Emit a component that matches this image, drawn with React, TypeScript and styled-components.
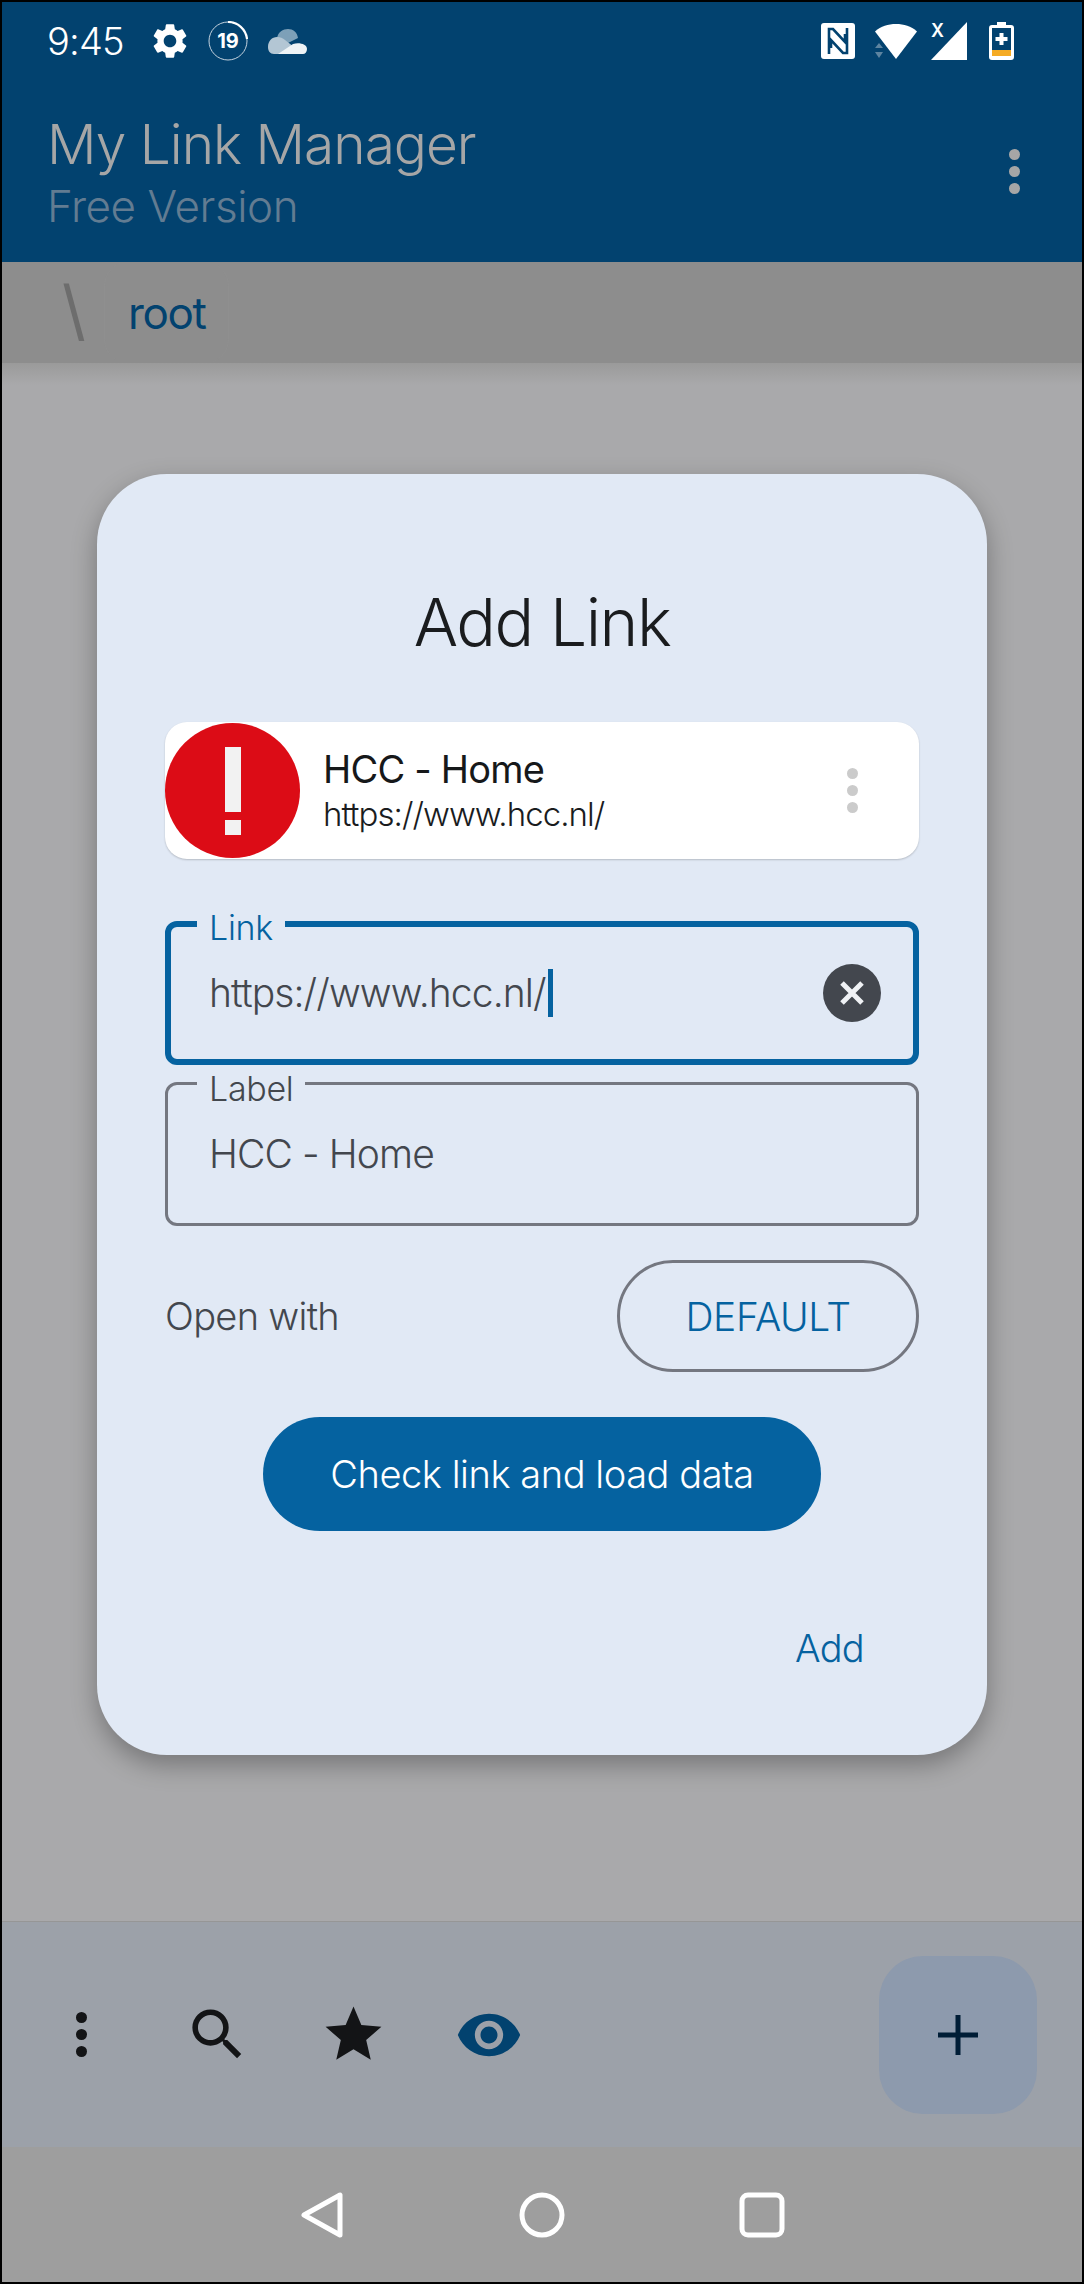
import styled, { createGlobalStyle } from 'styled-components'
import { MdSearch, MdSettings, MdStar, MdVisibility } from 'react-icons/md'

const BLUE = '#0562a0'
const DIALOG = '#e1e9f5'

const GlobalStyle = createGlobalStyle`
  * { box-sizing: border-box; }
  html, body { margin: 0; padding: 0; background: #000; }
  body { font-family: Inter, "Liberation Sans", sans-serif; font-weight: 300; }
`

const Screen = styled.div`
  width: 1084px;
  height: 2284px;
  border: 2px solid #000;
  display: flex;
  flex-direction: column;
  overflow: hidden;
  background: #a9a9ab;
`
const StatusBar = styled.div`
  height: 78px;
  flex: none;
  background: #02426f;
  padding: 0 68px 0 45px;
  display: flex;
  align-items: center;
  justify-content: space-between;
  color: #fff;
`
const StatusGroup = styled.div`
  display: flex;
  align-items: center;
`
const Time = styled.span`
  font-size: 38px;
  width: 78px;
  letter-spacing: -0.8px;
  margin-right: 24px;
`
const AppBar = styled.header`
  height: 182px;
  flex: none;
  background: #02426f;
  padding: 0 62px 0 45px;
  display: flex;
  align-items: center;
  justify-content: space-between;
`
const TitleBlock = styled.div`
  display: flex;
  flex-direction: column;
  margin-top: 2px;
`
const AppTitle = styled.div`
  font-size: 55px;
  line-height: 62px;
  color: #a6a6a6;
  letter-spacing: -1px;
`
const AppSubtitle = styled.div`
  font-size: 44px;
  line-height: 50px;
  margin-top: 6px;
  color: #627c92;
  letter-spacing: -0.45px;
`
const DotsColumn = styled.div<{ $size: number; $gap: number; $color: string }>`
  display: flex;
  flex-direction: column;
  gap: ${p => p.$gap}px;
  span {
    display: block;
    width: ${p => p.$size}px;
    height: ${p => p.$size}px;
    border-radius: 50%;
    background: ${p => p.$color};
  }
`
const Breadcrumb = styled.nav`
  height: 101px;
  flex: none;
  background: #8d8d8d;
  padding-left: 60px;
  display: flex;
  align-items: center;
`
const Separator = styled.span`
  font-size: 66px;
  font-weight: 400;
  color: #6d6d6d;
  width: 42px;
  margin-top: -6px;
`
const Crumb = styled.span`
  height: 101px;
  display: flex;
  align-items: center;
  padding: 0 23px;
  border: 1px solid #8f8f8f;
  border-top: 0;
  border-bottom: 0;
  border-radius: 24px;
  font-size: 44px;
  font-weight: 400;
  letter-spacing: -1.4px;
  color: #02426f;
`
const Main = styled.main`
  flex: 1;
  padding-top: 111px;
  display: flex;
  justify-content: center;
  align-items: flex-start;
  background: linear-gradient(#9a9a9a 0, #a9a9ab 22px);
`
const Dialog = styled.section`
  width: 890px;
  height: 1281px;
  background: ${DIALOG};
  border-radius: 70px;
  box-shadow: 0 10px 26px rgba(0, 0, 0, 0.3);
  padding: 129px 68px 0;
  display: flex;
  flex-direction: column;
`
const DialogTitle = styled.h2`
  margin: 0 0 80px;
  height: 39px;
  line-height: 39px;
  font-size: 66px;
  font-weight: 300;
  letter-spacing: -1.5px;
  text-align: center;
  color: #1a1c1e;
`
const Card = styled.div`
  height: 137px;
  flex: none;
  background: #fff;
  border-radius: 22px;
  box-shadow: 0 1px 2px rgba(0, 0, 0, 0.2);
  display: flex;
  align-items: center;
  padding-right: 61px;
  margin-bottom: 62px;
`
const ErrorBadge = styled.div`
  width: 135px;
  height: 135px;
  flex: none;
  border-radius: 50%;
  background: #dc0c16;
  display: flex;
  flex-direction: column;
  align-items: center;
  padding-top: 24px;
  gap: 8px;
  margin-right: 23px;
  i { display: block; width: 16px; background: #f2f2f2; }
  i:first-child { height: 65px; }
  i:last-child { height: 15px; }
`
const CardText = styled.div`
  flex: 1;
  display: flex;
  flex-direction: column;
`
const CardTitle = styled.div`
  font-size: 38px;
  line-height: 46px;
  font-weight: 400;
  letter-spacing: -0.8px;
  color: #16181a;
`
const CardUrl = styled.div`
  font-size: 33px;
  line-height: 42px;
  margin-top: 1px;
  letter-spacing: -0.95px;
  color: #1a1c1e;
`
const Field = styled.div<{ $focused?: boolean }>`
  position: relative;
  height: 144px;
  flex: none;
  border: ${p => (p.$focused ? `6px solid ${BLUE}` : '3px solid #747780')};
  border-radius: 12px;
  display: flex;
  align-items: center;
  justify-content: space-between;
  padding: 0 ${p => (p.$focused ? 32 : 30)}px 0 ${p => (p.$focused ? 38 : 41)}px;
  margin-bottom: 17px;
`
const FieldLabel = styled.label<{ $focused?: boolean }>`
  position: absolute;
  left: ${p => (p.$focused ? 26 : 29)}px;
  top: ${p => (p.$focused ? -17 : -14)}px;
  padding: 0 12px;
  background: ${DIALOG};
  font-size: 34px;
  line-height: 36px;
  letter-spacing: -0.3px;
  color: ${p => (p.$focused ? BLUE : '#43474e')};
`
const FieldValue = styled.div`
  font-size: 39px;
  line-height: 48px;
  letter-spacing: -0.9px;
  color: #43474e;
  display: flex;
  align-items: center;
`
const Caret = styled.span`
  display: block;
  width: 5px;
  height: 48px;
  margin-left: 2px;
  background: ${BLUE};
`
const ClearButton = styled.div`
  width: 58px;
  height: 58px;
  border-radius: 50%;
  background: #43474e;
  display: flex;
  align-items: center;
  justify-content: center;
`
const OpenRow = styled.div`
  display: flex;
  align-items: center;
  justify-content: space-between;
  margin: 17px 0 45px;
`
const OpenLabel = styled.span`
  font-size: 38px;
  letter-spacing: -0.7px;
  color: #43474e;
`
const OutlineButton = styled.div`
  width: 302px;
  height: 112px;
  border: 3px solid #747780;
  border-radius: 56px;
  display: flex;
  align-items: center;
  justify-content: center;
  font-size: 39px;
  letter-spacing: -0.4px;
  color: ${BLUE};
`
const PrimaryButton = styled.div`
  width: 558px;
  height: 114px;
  align-self: center;
  border-radius: 57px;
  background: ${BLUE};
  color: #fff;
  display: flex;
  align-items: center;
  justify-content: center;
  font-size: 38px;
  letter-spacing: -0.45px;
`
const AddAction = styled.div`
  align-self: flex-end;
  margin: 92px 55px 0 0;
  font-size: 38px;
  line-height: 50px;
  letter-spacing: -0.7px;
  color: ${BLUE};
`
const BottomBar = styled.div`
  height: 226px;
  flex: none;
  background: #9ca1a9;
  border-top: 1px solid #969696;
  padding: 0 45px 0 11px;
  display: flex;
  align-items: center;
  justify-content: space-between;
`
const BottomIcons = styled.div`
  display: flex;
`
const IconSlot = styled.div<{ $color?: string }>`
  width: 136px;
  display: flex;
  justify-content: center;
  align-items: center;
  color: ${p => p.$color ?? '#131416'};
`
const Fab = styled.div`
  width: 158px;
  height: 158px;
  border-radius: 44px;
  background: #8d9aad;
  display: flex;
  align-items: center;
  justify-content: center;
`
const NavBar = styled.div`
  height: 135px;
  flex: none;
  background: #9e9e9e;
  display: flex;
  align-items: center;
  justify-content: center;
`
const NavSlot = styled.div`
  width: 220px;
  display: flex;
  justify-content: center;
`

function Dots ({ size, gap, color }: Readonly<{ size: number, gap: number, color: string }>) {
  return (
    <DotsColumn $size={size} $gap={gap} $color={color}>
      <span /><span /><span />
    </DotsColumn>
  )
}

function NfcIcon () {
  return (
    <svg width="34" height="36" viewBox="0 0 34 36" style={{ marginRight: 20 }}>
      <rect width="34" height="36" rx="3" fill="#fff" />
      <path d="M8 31V6h4l12 13v-8M26 5v25h-4L10 17v8" fill="none" stroke="#02426f" strokeWidth="2.6" />
    </svg>
  )
}

function WifiIcon () {
  return (
    <svg width="42" height="37" viewBox="0 0 42 37" style={{ marginRight: 13 }}>
      <path d="M0 8.500C6 3 13 1 21 1s15 2 21 7.500L21 36Z" fill="#fff" />
      <path d="M0 25l4-5 4 5ZM0 29l4 6 4-6Z" fill="#5d84a0" />
    </svg>
  )
}

function CellIcon () {
  return (
    <svg width="38" height="44" viewBox="0 -6 38 44" style={{ marginRight: 21, marginTop: -6 }}>
      <path d="M37 0v38H1Z" fill="#fff" />
      <text x="1" y="15" fontFamily="Inter, sans-serif" fontSize="18" fontWeight="600" fill="#fff">X</text>
    </svg>
  )
}

function BatteryIcon () {
  return (
    <svg width="25" height="38" viewBox="0 0 25 38">
      <path d="M8 0h9v3h5a3 3 0 0 1 3 3v29a3 3 0 0 1-3 3H3a3 3 0 0 1-3-3V6a3 3 0 0 1 3-3h5Z" fill="#fff" />
      <rect x="3" y="6" width="19" height="22" fill="#02426f" />
      <rect x="3" y="28" width="19" height="6" fill="#f5ab24" />
      <path d="M10.500 11h4v4h4v4h-4v4h-4v-4h-4v-4h4Z" fill="#fff" />
    </svg>
  )
}

function TimerBadge () {
  return (
    <svg width="40" height="40" viewBox="0 0 40 40" style={{ marginRight: 20 }}>
      <circle cx="20" cy="20" r="19" fill="none" stroke="#c4d2de" strokeWidth="1" />
      <path d="M20 1a19 19 0 0 1 19 17" fill="none" stroke="#fff" strokeWidth="2.200" />
      <text x="20" y="27" textAnchor="middle" fontFamily="Inter, sans-serif" fontSize="20" fontWeight="700" fill="#fff">19</text>
    </svg>
  )
}

function CloudIcon () {
  return (
    <svg width="39" height="25" viewBox="0 0 39 25">
      <path d="M9 9C10 3 15 0 20 0s9 3 10 9l-12 6Z" fill="#7da0b8" />
      <path d="M0 18c0-6 4-10 9-10 3 0 6 1 8 3l9 7-10 7H6c-4 0-6-3-6-7Z" fill="#b3c6d4" />
      <path d="M10 25l15-10c6-2 14 0 14 5 0 3-2 5-4 5Z" fill="#eef3f6" />
    </svg>
  )
}

export default function App () {
  return (
    <>
      <GlobalStyle />
      <Screen>
        <StatusBar>
          <StatusGroup>
            <Time>9:45</Time>
            <MdSettings size={42} color="#fff" style={{ marginRight: 17 }} />
            <TimerBadge />
            <CloudIcon />
          </StatusGroup>
          <StatusGroup>
            <NfcIcon />
            <WifiIcon />
            <CellIcon />
            <BatteryIcon />
          </StatusGroup>
        </StatusBar>
        <AppBar>
          <TitleBlock>
            <AppTitle>My Link Manager</AppTitle>
            <AppSubtitle>Free Version</AppSubtitle>
          </TitleBlock>
          <Dots size={11} gap={6} color="#a6a6a6" />
        </AppBar>
        <Breadcrumb>
          <Separator>\</Separator>
          <Crumb>root</Crumb>
        </Breadcrumb>
        <Main>
          <Dialog>
            <DialogTitle>Add Link</DialogTitle>
            <Card>
              <ErrorBadge><i /><i /></ErrorBadge>
              <CardText>
                <CardTitle>HCC - Home</CardTitle>
                <CardUrl>https://www.hcc.nl/</CardUrl>
              </CardText>
              <Dots size={11} gap={6} color="#cbcbcb" />
            </Card>
            <Field $focused>
              <FieldLabel $focused>Link</FieldLabel>
              <FieldValue>https://www.hcc.nl/<Caret /></FieldValue>
              <ClearButton>
                <svg width="30" height="30" viewBox="0 0 30 30">
                  <path d="M5 5l20 20M25 5L5 25" stroke="#f0f2f5" strokeWidth="5" />
                </svg>
              </ClearButton>
            </Field>
            <Field>
              <FieldLabel>Label</FieldLabel>
              <FieldValue>HCC - Home</FieldValue>
            </Field>
            <OpenRow>
              <OpenLabel>Open with</OpenLabel>
              <OutlineButton>DEFAULT</OutlineButton>
            </OpenRow>
            <PrimaryButton>Check link and load data</PrimaryButton>
            <AddAction>Add</AddAction>
          </Dialog>
        </Main>
        <BottomBar>
          <BottomIcons>
            <IconSlot><Dots size={11} gap={6} color="#131416" /></IconSlot>
            <IconSlot><MdSearch size={67} /></IconSlot>
            <IconSlot><MdStar size={67} /></IconSlot>
            <IconSlot $color="#02426f"><MdVisibility size={68} /></IconSlot>
          </BottomIcons>
          <Fab>
            <svg width="40" height="40" viewBox="0 0 40 40">
              <path d="M20 0v40M0 20h40" stroke="#001d36" strokeWidth="5" />
            </svg>
          </Fab>
        </BottomBar>
        <NavBar>
          <NavSlot>
            <svg width="44" height="48" viewBox="0 0 44 48">
              <path d="M40 4v40L4 24Z" fill="none" stroke="#fff" strokeWidth="5" strokeLinejoin="round" />
            </svg>
          </NavSlot>
          <NavSlot>
            <svg width="46" height="46" viewBox="0 0 46 46">
              <circle cx="23" cy="23" r="20" fill="none" stroke="#fff" strokeWidth="5" />
            </svg>
          </NavSlot>
          <NavSlot>
            <svg width="46" height="46" viewBox="0 0 46 46">
              <rect x="3" y="3" width="40" height="40" rx="6" fill="none" stroke="#fff" strokeWidth="5" />
            </svg>
          </NavSlot>
        </NavBar>
      </Screen>
    </>
  )
}
